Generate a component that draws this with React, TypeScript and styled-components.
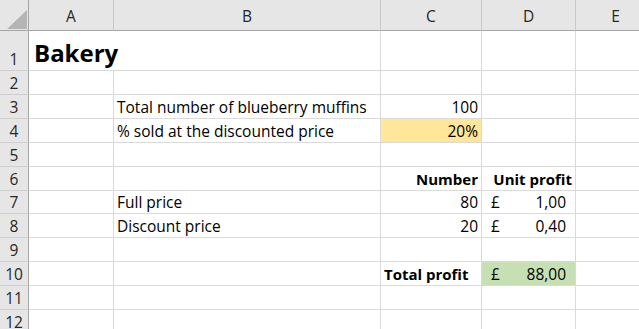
import React from "react";
import styled, { createGlobalStyle, css } from "styled-components";

const Global = createGlobalStyle`
  html, body { margin: 0; padding: 0; background: #ffffff; overflow: hidden; }
  body { font-family: "Open Sans", "Noto Sans", "Liberation Sans", sans-serif; }
`;

const Sheet = styled.div`
  display: grid;
  grid-template-columns: 29px 85px 267px 101px 94px 80px;
  grid-template-rows: 31px 40px 24px 24px 24px 24px 24px 23px 24px 24px 24px 24px 24px;
  width: 639px;
  height: 329px;
  overflow: hidden;
  background: #ffffff;
  color: #000000;
  font-size: 15.5px;
`;

const Corner = styled.div`
  box-sizing: border-box;
  background: #e6e6e6;
  border-right: 1px solid #a6a6a6;
  border-bottom: 1px solid #a6a6a6;
  display: flex;
  align-items: flex-end;
  justify-content: flex-end;
  padding: 0 1px 1px 0;
`;

const ColHead = styled.div`
  box-sizing: border-box;
  background: #e6e6e6;
  border-right: 1px solid #c9c9c9;
  border-bottom: 1px solid #a6a6a6;
  display: flex;
  align-items: center;
  justify-content: center;
  padding-top: 2px;
  color: #262626;
  font-size: 15.5px;
`;

const RowHead = styled.div`
  box-sizing: border-box;
  background: #e6e6e6;
  border-right: 1px solid #a6a6a6;
  border-bottom: 1px solid #cfcfcf;
  display: flex;
  align-items: flex-end;
  justify-content: center;
  padding-bottom: 1px;
  color: #262626;
  font-size: 15.5px;
  line-height: 20px;
`;

type CellProps = {
  $align?: "left" | "right";
  $bold?: boolean;
  $fill?: string;
  $span?: number;
};

const Cell = styled.div<CellProps>`
  box-sizing: border-box;
  border-right: 1px solid #dadada;
  border-bottom: 1px solid #dadada;
  background: ${(p) => p.$fill ?? "#ffffff"};
  display: flex;
  align-items: flex-end;
  justify-content: ${(p) => (p.$align === "right" ? "flex-end" : "flex-start")};
  padding: 0 3px 1px 3px;
  line-height: 20px;
  white-space: nowrap;
  font-weight: ${(p) => (p.$bold ? 700 : 400)};
  font-size: ${(p) => (p.$bold ? "15px" : "15.5px")};
  ${(p) =>
    p.$span &&
    css`
      grid-column: span ${p.$span};
    `}
`;

const Title = styled(Cell)`
  font-size: 24px;
  line-height: 30px;
  padding: 0 0 2px 5px;
  font-weight: 700;
`;

const AcctCell = styled(Cell)`
  justify-content: space-between;
  padding: 0 9px 1px 9px;
`;

const cols = ["A", "B", "C", "D", "E"];

type Row = {
  n: number;
  cells: React.ReactNode;
};

const Blank = ({ count }: { count: number }) => (
  <>
    {Array.from({ length: count }).map((_, i) => (
      <Cell key={i} />
    ))}
  </>
);

const rows: Row[] = [
  {
    n: 1,
    cells: (
      <>
        <Title $span={2}>Bakery</Title>
        <Blank count={3} />
      </>
    ),
  },
  { n: 2, cells: <Blank count={5} /> },
  {
    n: 3,
    cells: (
      <>
        <Cell />
        <Cell>Total number of blueberry muffins</Cell>
        <Cell $align="right">100</Cell>
        <Blank count={2} />
      </>
    ),
  },
  {
    n: 4,
    cells: (
      <>
        <Cell />
        <Cell>% sold at the discounted price</Cell>
        <Cell $align="right" $fill="#ffe699">
          20%
        </Cell>
        <Blank count={2} />
      </>
    ),
  },
  { n: 5, cells: <Blank count={5} /> },
  {
    n: 6,
    cells: (
      <>
        <Blank count={2} />
        <Cell $align="right" $bold>
          Number
        </Cell>
        <Cell $align="right" $bold>
          Unit profit
        </Cell>
        <Cell />
      </>
    ),
  },
  {
    n: 7,
    cells: (
      <>
        <Cell />
        <Cell>Full price</Cell>
        <Cell $align="right">80</Cell>
        <AcctCell>
          <span>£</span>
          <span>1,00</span>
        </AcctCell>
        <Cell />
      </>
    ),
  },
  {
    n: 8,
    cells: (
      <>
        <Cell />
        <Cell>Discount price</Cell>
        <Cell $align="right">20</Cell>
        <AcctCell>
          <span>£</span>
          <span>0,40</span>
        </AcctCell>
        <Cell />
      </>
    ),
  },
  { n: 9, cells: <Blank count={5} /> },
  {
    n: 10,
    cells: (
      <>
        <Blank count={2} />
        <Cell $bold>Total profit</Cell>
        <AcctCell $fill="#c6e0b4">
          <span>£</span>
          <span>88,00</span>
        </AcctCell>
        <Cell />
      </>
    ),
  },
  { n: 11, cells: <Blank count={5} /> },
  { n: 12, cells: <Blank count={5} /> },
];

export default function App() {
  return (
    <>
      <Global />
      <Sheet>
        <Corner>
          <svg width="20" height="19" viewBox="0 0 20 19">
            <polygon points="20,0 20,19 0,19" fill="#b5b5b5" />
          </svg>
        </Corner>
        {cols.map((c) => (
          <ColHead key={c}>{c}</ColHead>
        ))}
        {rows.map((r) => (
          <React.Fragment key={r.n}>
            <RowHead>{r.n}</RowHead>
            {r.cells}
          </React.Fragment>
        ))}
      </Sheet>
    </>
  );
}
